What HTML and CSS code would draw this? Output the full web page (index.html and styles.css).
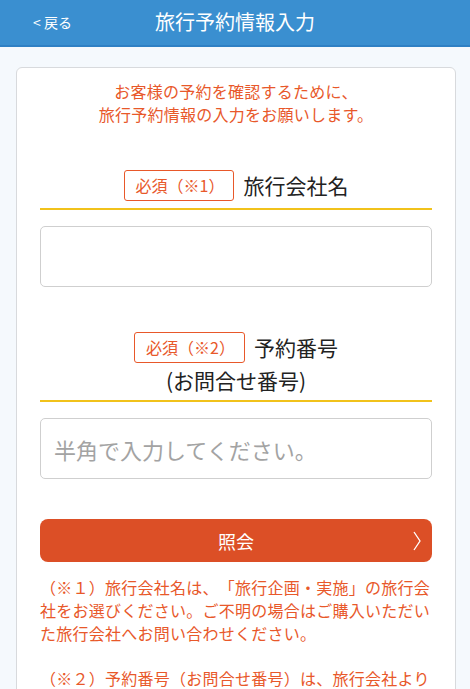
FILE: index.html
```html
<!DOCTYPE html>
<html lang="ja">
<head>
<meta charset="utf-8">
<link rel="stylesheet" href="styles.css">
</head>
<body>
<header class="header">
  <a class="back">&lt; 戻る</a>
  <h1 class="title">旅行予約情報入力</h1>
</header>
<main class="page">
  <section class="card">
    <p class="intro">お客様の予約を確認するために、<br>旅行予約情報の入力をお願いします。</p>

    <div class="field first">
      <div class="label">
        <span class="badge">必須（※1）</span><span class="label-text">旅行会社名</span>
      </div>
      <div class="input"></div>
    </div>

    <div class="field second">
      <div class="label">
        <span class="badge">必須（※2）</span><span class="label-text">予約番号</span>
        <div class="label-sub">(お問合せ番号)</div>
      </div>
      <div class="input"><span class="placeholder">半角で入力してください。</span></div>
    </div>

    <button class="submit"><span>照会</span>
      <svg class="chev" width="10" height="20" viewBox="0 0 10 20"><path d="M2 1 L8 10 L2 19" fill="none" stroke="#fff" stroke-width="1.3"/></svg>
    </button>

    <div class="notes">
      <p>（※１）旅行会社名は、「旅行企画・実施」の旅行会社をお選びください。ご不明の場合はご購入いただいた旅行会社へお問い合わせください。</p>
      <p>（※２）予約番号（お問合せ番号）は、旅行会社より</p>
    </div>
  </section>
</main>
</body>
</html>
```
FILE: styles.css
```css
* { box-sizing: border-box; }
html, body { margin: 0; padding: 0; }
body {
  background: #f5f9fd;
  font-family: "Noto Sans CJK JP", "Noto Sans", sans-serif;
  color: #222;
  overflow: hidden;
  height: 689px;
  text-spacing-trim: space-all;
}
.header {
  height: 47px;
  background: #3a8fd0;
  border-bottom: 2px solid #2f80c4;
  display: flex;
  align-items: center;
  justify-content: center;
  position: relative;
}
.back {
  position: absolute;
  left: 33px;
  top: 12px;
  color: #fff;
  font-size: 14px;
  line-height: 20px;
}
.title {
  margin: 0;
  color: #fff;
  font-size: 20px;
  font-weight: 400;
  line-height: 26px;
  margin-top: -2px;
}
.page {
  padding: 20px 14px 0 16px;
}
.card {
  background: #fff;
  border: 1px solid #d8dadd;
  border-radius: 6px;
  padding: 12px 23px 20px;
  min-height: 700px;
}
.intro {
  margin: 0;
  text-align: center;
  color: #e8582a;
  font-size: 16px;
  letter-spacing: 0.25px;
  line-height: 23px;
}
.field.first { margin-top: 44px; }
.field.second { margin-top: 45px; }
.label {
  text-align: center;
  border-bottom: 2px solid #f1c21b;
}
.first .label { padding-bottom: 7px; }
.second .label { padding-bottom: 4px; }
.badge {
  display: inline-block;
  border: 1px solid #e8582a;
  border-radius: 3px;
  color: #e8582a;
  font-size: 16px;
  line-height: 29px;
  padding: 0 9px 0 11px;
  vertical-align: middle;
}
.label-text {
  display: inline-block;
  font-size: 21px;
  line-height: 31px;
  margin-left: 9px;
  vertical-align: middle;
  color: #222;
}
.label-sub {
  font-size: 21px;
  line-height: 32px;
  color: #222;
  margin-top: 1px;
}
.input {
  margin-top: 16px;
  height: 61px;
  border: 1px solid #cfcfcf;
  border-radius: 5px;
  display: flex;
  align-items: center;
  padding-left: 13px;
}
.placeholder {
  color: #a3a3a3;
  font-size: 22px;
  margin-top: 1px;
}
.submit {
  margin-top: 40px;
  width: 100%;
  height: 43px;
  border: none;
  border-radius: 8px;
  background: #dc4f26;
  color: #fff;
  font-family: inherit;
  font-size: 18px;
  position: relative;
  display: flex;
  align-items: center;
  justify-content: center;
  padding: 0;
}
.chev {
  position: absolute;
  right: 10px;
  top: 12px;
}
.notes {
  margin-top: 14px;
  color: #e8582a;
  font-size: 16px;
  letter-spacing: 0.25px;
  line-height: 23px;
}
.notes p { margin: 0 0 22px; }
```
